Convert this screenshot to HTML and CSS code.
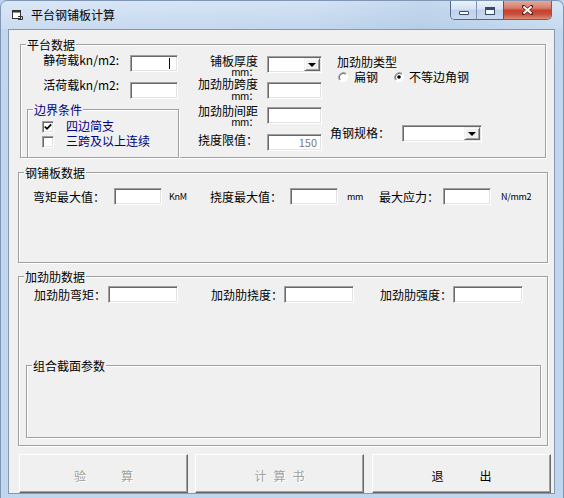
FILE: index.html
```html
<!DOCTYPE html>
<html lang="zh-CN">
<head>
<meta charset="utf-8">
<title>平台钢铺板计算</title>
<link rel="stylesheet" href="styles.css">
</head>
<body>
<div class="window">
  <div class="titlebar">
    <svg class="app-icon" viewBox="0 0 11 10" width="11" height="10">
      <rect x="0.5" y="0.5" width="8" height="8" fill="#fff" stroke="#333"/>
      <rect x="0.5" y="0.5" width="8" height="2" fill="#333"/>
      <path d="M6 6.5 H10.5 V9.5 H6" fill="none" stroke="#333"/>
    </svg>
    <span class="title">平台钢铺板计算</span>
    <div class="caption">
      <div class="cbtn cmin"><span class="min-glyph"></span></div>
      <div class="cbtn cmax"><span class="max-glyph"></span></div>
      <div class="cbtn cclose">
        <svg viewBox="0 0 11 10" width="11" height="10">
          <path d="M1.5 1.5 L9.5 8.5 M9.5 1.5 L1.5 8.5" stroke="#5a1d16" stroke-width="3.4" stroke-linecap="round"/>
          <path d="M1.5 1.5 L9.5 8.5 M9.5 1.5 L1.5 8.5" stroke="#fff" stroke-width="2"/>
        </svg>
      </div>
    </div>
  </div>

  <div class="client">
    <div class="group g1">
      <span class="gtitle">平台数据</span>

      <div class="col-left">
        <div class="frow">
          <span class="lbl-l">静荷载kn/m2:</span>
          <div class="tb tb-s tb-caret"><span class="caret"></span></div>
        </div>
        <div class="frow row-2">
          <span class="lbl-l">活荷载kn/m2:</span>
          <div class="tb tb-s tb-low"></div>
        </div>
        <div class="bbox">
          <span class="gtitle navy">边界条件</span>
          <div class="chkrow">
            <span class="chk">
              <svg viewBox="0 0 8 8" width="8" height="8"><path d="M0.8 3.6 L3 5.8 L7.2 1.4" fill="none" stroke="#000" stroke-width="1.7"/></svg>
            </span>
            <span class="chklbl">四边简支</span>
          </div>
          <div class="chkrow">
            <span class="chk"></span>
            <span class="chklbl">三跨及以上连续</span>
          </div>
        </div>
      </div>

      <div class="col-mid">
        <div class="mrow">
          <span class="mlbl"><span class="ln">铺板厚度</span><span class="ln2 l2a">mm：</span></span>
          <div class="combo combo-s off1"><span class="cfield"></span><span class="cbtn-drop"><span class="tri"></span></span></div>
        </div>
        <div class="mrow mrow-2">
          <span class="mlbl"><span class="ln">加劲肋跨度</span><span class="ln2 l2b">mm：</span></span>
          <div class="tb tb-m off4"></div>
        </div>
        <div class="mrow mrow-3">
          <span class="mlbl"><span class="ln">加劲肋间距</span><span class="ln2 l2a">mm：</span></span>
          <div class="tb tb-m off2"></div>
        </div>
        <div class="mrow mrow-4">
          <span class="mlbl"><span class="ln">挠度限值：</span></span>
          <div class="tb tb-m tb-val">150</div>
        </div>
      </div>

      <div class="col-right">
        <div class="rtitle">加劲肋类型</div>
        <div class="radios">
          <svg class="radio" viewBox="0 0 12 12" width="12" height="12">
            <circle cx="6" cy="6" r="5" fill="#fff"/>
            <path d="M2.5 9.5 A5 5 0 0 1 9.5 2.5" fill="none" stroke="#a0a0a0"/>
            <path d="M3.2 8.8 A4 4 0 0 1 8.8 3.2" fill="none" stroke="#696969"/>
            <path d="M9.5 2.5 A5 5 0 0 1 2.5 9.5" fill="none" stroke="#ffffff"/>
          </svg>
          <span class="rlbl r1">扁钢</span>
          <svg class="radio" viewBox="0 0 12 12" width="12" height="12">
            <circle cx="6" cy="6" r="5" fill="#fff"/>
            <path d="M2.5 9.5 A5 5 0 0 1 9.5 2.5" fill="none" stroke="#a0a0a0"/>
            <path d="M3.2 8.8 A4 4 0 0 1 8.8 3.2" fill="none" stroke="#696969"/>
            <path d="M9.5 2.5 A5 5 0 0 1 2.5 9.5" fill="none" stroke="#ffffff"/>
            <circle cx="6" cy="6" r="1.8" fill="#000"/>
          </svg>
          <span class="rlbl r2">不等边角钢</span>
        </div>
        <div class="rrow">
          <span class="rlbl2">角钢规格：</span>
          <div class="combo combo-l"><span class="cfield"></span><span class="cbtn-drop"><span class="tri"></span></span></div>
        </div>
      </div>
    </div>

    <div class="group g2">
      <span class="gtitle">钢铺板数据</span>
      <span class="lbl2">弯矩最大值：</span>
      <div class="tb tb2 ml9"></div>
      <span class="unit u1">KnM</span>
      <span class="lbl2 ml21">挠度最大值：</span>
      <div class="tb tb2 ml8"></div>
      <span class="unit u2">mm</span>
      <span class="lbl2 ml12">最大应力：</span>
      <div class="tb tb2 ml4"></div>
      <span class="unit u3">N/mm2</span>
    </div>

    <div class="group g3">
      <span class="gtitle">加劲肋数据</span>
      <div class="g3row">
        <span class="lbl2">加劲肋弯矩：</span>
        <div class="tb tb3 ml2"></div>
        <span class="lbl2 ml33">加劲肋挠度：</span>
        <div class="tb tb3 ml1"></div>
        <span class="lbl2 ml26">加劲肋强度：</span>
        <div class="tb tb3 ml1"></div>
      </div>
      <div class="group g3i">
        <span class="gtitle">组合截面参数</span>
      </div>
    </div>

    <div class="btnrow">
      <div class="btn b1 disabled"><span>验</span><span>算</span></div>
      <div class="btn b2 disabled"><span>计</span><span>算</span><span>书</span></div>
      <div class="btn b3"><span>退</span><span>出</span></div>
    </div>
  </div>
</div>
</body>
</html>
```

FILE: styles.css
```css
* { box-sizing: border-box; }
html, body { margin: 0; padding: 0; }
body {
  width: 564px;
  height: 498px;
  overflow: hidden;
  background: #bcd2ec;
  font-family: "Noto Sans CJK SC", "Noto Sans", sans-serif;
  font-size: 12px;
  color: #000;
}

.window {
  width: 564px;
  height: 498px;
  background: linear-gradient(to bottom, #d4e3f5 0px, #c2d6ee 28px, #c0d5ee 100%);
  border: 1px solid #7f96b5;
  border-bottom: none;
  border-radius: 7px 7px 0 0;
  display: flex;
  flex-direction: column;
}

/* title bar */
.titlebar {
  height: 28px;
  display: flex;
  align-items: flex-start;
  background: linear-gradient(90deg, rgba(255,255,255,0.15), rgba(160,190,225,0.0) 55%, rgba(150,180,215,0.25) 75%, rgba(255,255,255,0.1));
}
.app-icon { margin: 9px 0 0 11px; flex: none; }
.title {
  margin: 6px 0 0 8px;
  line-height: 16px;
  font-size: 12px;
  color: #000;
}
.caption {
  margin-left: auto;
  margin-right: 11px;
  display: flex;
  height: 19px;
  border: 1px solid #54688a;
  border-top: none;
  border-radius: 0 0 5px 5px;
  overflow: hidden;
}
.cbtn {
  height: 18px;
  display: flex;
  align-items: center;
  justify-content: center;
}
.cmin, .cmax {
  background: linear-gradient(to bottom, #eaf1fa 0%, #d6e3f3 45%, #bfd2ea 50%, #c9daf0 100%);
}
.cmin { width: 26px; border-right: 1px solid #8096b4; }
.cmax { width: 27px; border-right: 1px solid #7a4a45; }
.cclose {
  width: 47px;
  background: linear-gradient(to bottom, #e6a99c 0%, #d7796a 40%, #c5412f 52%, #c9523f 75%, #dd8c76 100%);
}
.min-glyph {
  width: 10px;
  height: 4px;
  margin-top: 5px;
  background: #fff;
  border: 1px solid #384a66;
  border-radius: 1px;
}
.max-glyph {
  width: 10px;
  height: 8px;
  border: 1px solid #384a66;
  border-top-width: 3px;
  background: #fff;
  box-shadow: inset 0 0 0 1px #eef4fb;
  margin-top: 1px;
}

/* client */
.client {
  margin-left: 7px;
  width: 547px;
  height: 465px;
  border: 1px solid #8797ae;
  background: #f0f0f0;
  display: flex;
  flex-direction: column;
  align-items: flex-start;
}

.group {
  position: relative;
  border: 1px solid #a0a0a0;
  box-shadow: inset 1px 1px 0 #fff, 1px 1px 0 #fff;
}
.gtitle {
  position: absolute;
  top: -7px;
  left: 5px;
  padding: 0 1px;
  background: #f0f0f0;
  line-height: 13px;
  white-space: nowrap;
}
.navy { color: #000080; }

.g1 {
  margin: 14px 0 0 11px;
  width: 526px;
  height: 114px;
  display: flex;
  align-items: flex-start;
}

/* text boxes */
.tb {
  flex: none;
  background: #fff;
  border: 1px solid;
  border-color: #a0a0a0 #fff #fff #a0a0a0;
  box-shadow: inset 1px 1px 0 #696969, inset -1px -1px 0 #e3e3e3;
  height: 17px;
}

/* left column */
.col-left {
  width: 165px;
  display: flex;
  flex-direction: column;
  align-items: flex-start;
  padding-top: 9px;
}
.frow { display: flex; align-items: flex-start; }
.row-2 { margin-top: 7px; }
.lbl-l {
  width: 98px;
  margin-right: 11px;
  text-align: right;
  line-height: 12px;
  white-space: nowrap;
}
.tb-s { width: 48px; margin-top: 1px; }
.tb-low { margin-top: 3px; }
.tb-caret { display: flex; align-items: flex-start; }
.caret { width: 1px; height: 11px; background: #000; margin: 2px 0 0 38px; }

.bbox {
  position: relative;
  margin: 10px 0 0 6px;
  width: 152px;
  height: 49px;
  border: 1px solid #a0a0a0;
  box-shadow: inset 1px 1px 0 #fff, 1px 1px 0 #fff;
  padding: 11px 0 0 14px;
  display: flex;
  flex-direction: column;
  gap: 3px;
}
.chkrow { display: flex; align-items: flex-start; height: 12px; }
.chk {
  width: 12px;
  height: 12px;
  margin-right: 12px;
  background: #fff;
  border: 1px solid;
  border-color: #a0a0a0 #fff #fff #a0a0a0;
  box-shadow: inset 1px 1px 0 #696969, inset -1px -1px 0 #e3e3e3;
  display: flex;
  align-items: center;
  justify-content: center;
}
.chklbl { color: #000080; line-height: 12px; margin-top: -1px; white-space: nowrap; }

/* middle column */
.col-mid {
  width: 136px;
  padding-top: 10px;
  display: flex;
  flex-direction: column;
}
.mrow { display: flex; align-items: flex-start; }
.mrow-2 { margin-top: 1px; }
.mrow-3 { margin-top: 3px; }
.mrow-4 { margin-top: 7px; }
.mlbl {
  width: 72px;
  margin-right: 9px;
  text-align: right;
  white-space: nowrap;
}
.ln { display: block; line-height: 12px; }
.ln2 { display: block; font-size: 10px; letter-spacing: -0.6px; }
.l2a { line-height: 10px; }
.l2b { line-height: 12px; }
.tb-m { width: 55px; }
.off1 { margin-top: 1px; }
.off2 { margin-top: 2px; }
.off4 { margin-top: 4px; }
.tb-val {
  text-align: right;
  padding-right: 4px;
  font-size: 11px;
  line-height: 15px;
  color: #7a7a7a;
}

/* combo */
.combo {
  flex: none;
  display: flex;
  height: 17px;
  background: #fff;
  border: 1px solid;
  border-color: #a0a0a0 #fff #fff #a0a0a0;
  box-shadow: inset 1px 1px 0 #696969, inset -1px -1px 0 #e3e3e3;
  padding: 1px;
}
.combo-s { width: 55px; }
.combo-l { width: 80px; }
.cfield { flex: 1; }
.cbtn-drop {
  width: 16px;
  height: 13px;
  background: #f0f0f0;
  border: 1px solid;
  border-color: #f0f0f0 #696969 #696969 #f0f0f0;
  box-shadow: inset 1px 1px 0 #fff, inset -1px -1px 0 #a0a0a0;
  display: flex;
  align-items: center;
  justify-content: center;
}
.tri {
  width: 0;
  height: 0;
  border-left: 4px solid transparent;
  border-right: 4px solid transparent;
  border-top: 4px solid #000;
  margin-top: 1px;
}

/* right column */
.col-right {
  margin-left: 8px;
  padding-top: 11px;
  display: flex;
  flex-direction: column;
  align-items: flex-start;
}
.rtitle { margin-left: 7px; line-height: 12px; white-space: nowrap; }
.radios {
  display: flex;
  align-items: center;
  height: 12px;
  margin: 3px 0 0 7px;
}
.radio { flex: none; margin-right: 5px; }
.rlbl { line-height: 12px; white-space: nowrap; }
.r1 { width: 24px; margin-right: 15px; }
.r2 { margin-left: -1px; }
.rrow { display: flex; align-items: flex-start; margin-top: 42px; }
.rlbl2 { width: 60px; margin: 2px 12px 0 0; line-height: 12px; white-space: nowrap; }

/* group 2 */
.g2 {
  margin: 14px 0 0 9px;
  width: 530px;
  height: 91px;
  padding: 15px 0 0 14px;
  display: flex;
  align-items: flex-start;
}
.lbl2 { flex: none; line-height: 17px; white-space: nowrap; }
.tb2 { width: 48px; }
.unit {
  flex: none;
  font-size: 9px;
  letter-spacing: -0.3px;
  color: #000;
  line-height: 17px;
  margin-left: 7px;
  white-space: nowrap;
}
.u1 { width: 20px; }
.u2 { width: 16px; margin-left: 9px; }
.u3 { margin-left: 10px; }
.ml1 { margin-left: 1px; }
.ml2 { margin-left: 2px; }
.ml4 { margin-left: 4px; }
.ml8 { margin-left: 8px; }
.ml9 { margin-left: 9px; }
.ml12 { margin-left: 16px; }
.ml21 { margin-left: 21px; }
.ml26 { margin-left: 26px; }
.ml33 { margin-left: 33px; }

/* group 3 */
.g3 {
  margin: 13px 0 0 9px;
  width: 530px;
  height: 170px;
  padding-top: 9px;
  display: flex;
  flex-direction: column;
  align-items: flex-start;
}
.g3row { display: flex; align-items: flex-start; padding-left: 15px; }
.tb3 { width: 70px; }
.g3i {
  margin: 62px 0 0 7px;
  width: 515px;
  height: 73px;
}

/* buttons */
.btnrow {
  display: flex;
  margin: 8px 0 0 10px;
  height: 39px;
}
.btn {
  height: 39px;
  display: flex;
  justify-content: center;
  align-items: center;
  padding-top: 3px;
  background: #f0f0f0;
  border: 1px solid;
  border-color: #fff #696969 #696969 #fff;
  box-shadow: inset -1px -1px 0 #a0a0a0;
  white-space: nowrap;
}
.b1 { width: 169px; margin-right: 7px; gap: 35px; }
.b2 { width: 169px; margin-right: 8px; gap: 7px; }
.b3 { width: 179px; gap: 36px; }
.disabled { color: #a0a0a0; text-shadow: 1px 1px 0 #fff; }
```
